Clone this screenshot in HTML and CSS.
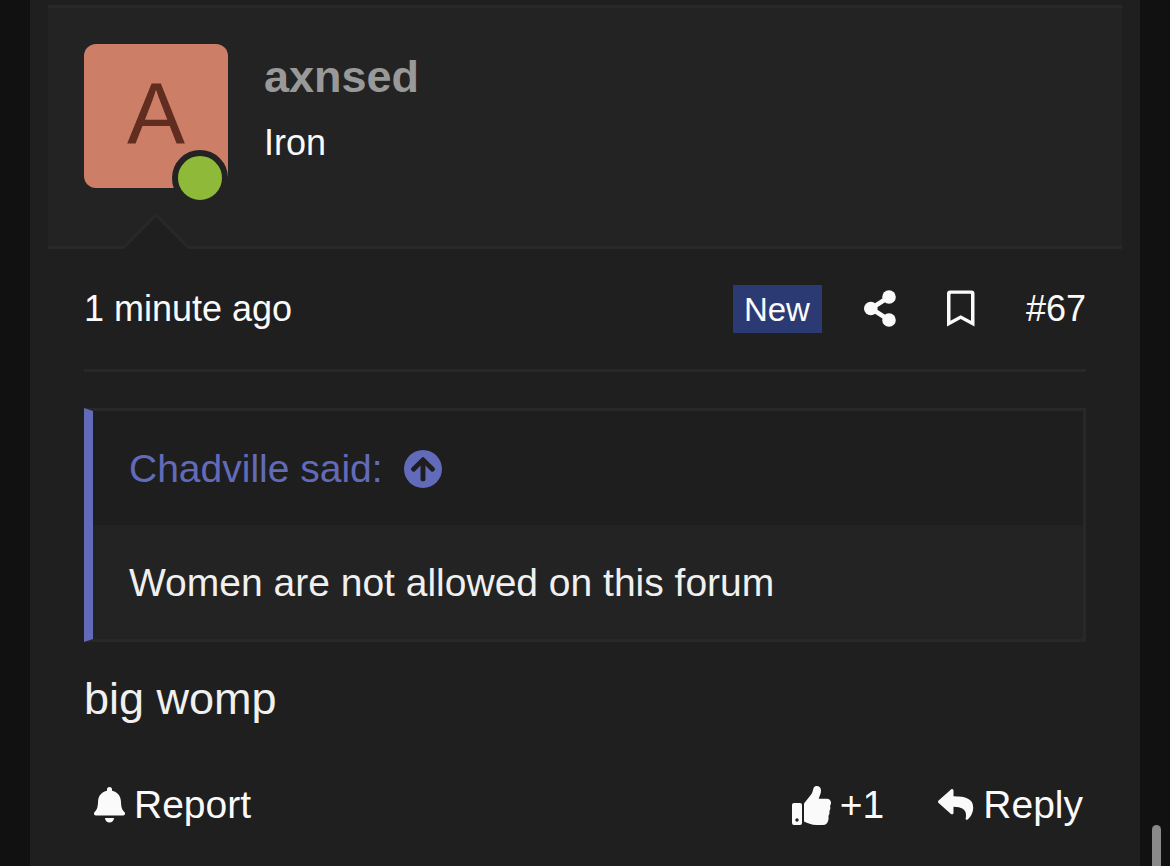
FILE: index.html
```html
<!DOCTYPE html>
<html lang="en">
<head>
    <meta charset="UTF-8">
    <meta name="viewport" content="width=device-width, initial-scale=1.0">
    <title>Forum post #67</title>
    <link rel="stylesheet" href="styles.css">
</head>
<body>
    <article class="message">
        <header class="message-user">
            <div class="avatar">
                <span class="avatar-letter">A</span>
                <span class="avatar-online" title="Online now"></span>
            </div>
            <div class="user-details">
                <h4 class="user-name"><a href="#user">axnsed</a></h4>
                <h5 class="user-title">Iron</h5>
            </div>
        </header>

        <div class="message-main">
            <div class="message-attribution">
                <a href="#post-67"><time>1 minute ago</time></a>
                <ul class="attribution-tools">
                    <li><span class="new-label">New</span></li>
                    <li>
                        <a class="icon-link" href="#share" aria-label="Share">
                            <svg class="icon" width="32" height="38" viewBox="0 0 32 38">
                                <path d="M25 7L7 18.500L25 30" fill="none" stroke="currentColor" stroke-width="4.500"/>
                                <circle cx="25" cy="7" r="6.800"/>
                                <circle cx="6.800" cy="18.500" r="6.800"/>
                                <circle cx="25" cy="30" r="6.800"/>
                            </svg>
                        </a>
                    </li>
                    <li>
                        <a class="icon-link" href="#bookmark" aria-label="Add bookmark">
                            <svg class="icon" width="28" height="38" viewBox="0 0 28 38"><path fill-rule="evenodd" d="M3 .5h21.500a3 3 0 0 1 3 3V36.500L13.700 29 0 36.500v-33a3 3 0 0 1 3-3zM3.500 4.500v26.300l10.200-5.600 10.300 5.600V4.500q0-.7-.7-.7H4.200q-.7 0-.7.7z"/></svg>
                        </a>
                    </li>
                    <li><a href="#post-67">#67</a></li>
                </ul>
            </div>

            <div class="message-content">
                <blockquote class="quote">
                    <div class="quote-title">
                        <a href="#quoted-post">Chadville said:
                            <svg class="icon" width="38" height="38" viewBox="8 8 496 496"><path d="M8 256C8 119 119 8 256 8s248 111 248 248-111 248-248 248S8 393 8 256zm143.6 28.9l72.4-75.4V392c0 13.3 10.7 24 24 24h16c13.3 0 24-10.7 24-24V209.5l72.4 75.4c9.3 9.7 24.8 9.9 34.3.4l10.9-11c9.4-9.4 9.4-24.6 0-33.9L273 107.7c-9.4-9.4-24.6-9.4-33.9 0L106.3 240.4c-9.4 9.4-9.4 24.6 0 33.9l10.9 11c9.6 9.5 25.1 9.3 34.4-.4z"/></svg>
                        </a>
                    </div>
                    <div class="quote-content">Women are not allowed on this forum</div>
                </blockquote>
                <p class="message-text">big womp</p>
            </div>

            <footer class="action-bar">
                <a class="action action-report" href="#report">
                    <svg class="icon" width="31" height="36" viewBox="0 0 31 36"><path d="M13 2.500a2.500 2.500 0 0 1 5 0v1.200c5 1 8.600 4.600 8.900 10.300.3 6.500 1 8.500 3.700 11.300.9 1.200.3 3.200-1.400 3.200H1.800C.1 28.500-.5 26.500.4 25.300 3.100 22.500 3.800 20.500 4.100 14 4.400 8.300 8 4.700 13 3.700zM11 31h9a4.500 4.500 0 0 1-9 0z"/></svg>
                    Report
                </a>
                <a class="action" href="#like">
                    <svg class="icon" width="39" height="39" viewBox="0 0 39 39"><path fill-rule="evenodd" d="M2 17h6a2 2 0 0 1 2 2v18a2 2 0 0 1-2 2H2a2 2 0 0 1-2-2V19a2 2 0 0 1 2-2zM5 32.300a1.700 1.700 0 1 0 0 3.400a1.700 1.700 0 1 0 0-3.400z"/><path d="M12 18.500c0-1 .3-1.500 1-2.200L19.500 8c1.500-2 1.300-5 2.500-6.700C23.800-1 28.800-.2 29 4.200c.2 3.300-1.700 5.800-2.300 8.600h8.300c2.500 0 4 1.800 4 4 0 1.500-.5 2.500-1 3.200.6 1.500.5 3.500-.6 5 .4 1.800 0 3.500-1 5 .3 2 .2 3.800-.3 4.800-.5 2.500-2.200 4.200-5.100 4.200h-6.300c-5.500 0-9-2-12.700-3.500z"/></svg>
                    +1
                </a>
                <a class="action" href="#reply">
                    <svg class="icon" width="36" height="34" viewBox="0 0 36 34"><path d="M.6 12.500L13 1.500c1-.9 2.500-.3 2.500 1.200v5.600C28 8.300 35.200 11 35.200 19.500c0 5-2.500 9.500-5.500 12-1 .8-2.300.1-2-1.200 1.700-8.500-3-11.300-12.200-11.600v6c0 1.500-1.500 2.100-2.500 1.200L.6 14.900c-.8-.7-.8-1.700 0-2.400z"/></svg>
                    Reply
                </a>
            </footer>
        </div>
    </article>

    <div class="scroll-thumb"></div>
</body>
</html>
```

FILE: styles.css
```css
* {
    box-sizing: border-box;
}
body {
    margin: 0;
    padding: 0 30px;
    background: #111;
    color: #fafafa;
    font-family: "Liberation Sans", Arial, sans-serif;
    font-size: 39px;
    line-height: 42px;
}
a {
    color: inherit;
    text-decoration: none;
}
.icon {
    display: block;
    fill: currentColor;
}
.message {
    min-height: 100vh;
    padding: 5px 18px 0;
    background: #1f1f1f;
}

/* User cell */
.message-user {
    position: relative;
    display: flex;
    gap: 36px;
    padding: 36px 36px 58px;
    background: #232323;
    border-top: 3px solid #282828;
    border-bottom: 3px solid #282828;
}
.message-user::before,
.message-user::after {
    content: "";
    position: absolute;
    left: 72px;
    bottom: -3px;
    border: 36px solid transparent;
    border-top: 0;
    border-bottom-color: #282828;
}
.message-user::after {
    bottom: -7px;
    border-bottom-color: #1f1f1f;
}
.avatar {
    position: relative;
    width: 144px;
    height: 144px;
    border-radius: 12px;
    background: #cc7f66;
    color: #602d20;
    font-size: 87px;
    line-height: 140px;
    text-align: center;
}
.avatar-online {
    position: absolute;
    right: 0;
    bottom: -18px;
    width: 56px;
    height: 56px;
    border: 6px solid #232323;
    border-radius: 50%;
    background: #8fb939;
}
.user-details {
    padding-top: 6px;
}
.user-name {
    margin: 0;
    color: #999;
    font-size: 45px;
    line-height: 54px;
}
.user-title {
    margin: 18px 0 0;
    font-size: 36px;
    font-weight: normal;
}

/* Post */
.message-main {
    padding: 0 36px;
}
.message-attribution {
    display: flex;
    align-items: center;
    justify-content: space-between;
    height: 123px;
    border-bottom: 3px solid #282828;
    font-size: 36px;
}
.attribution-tools {
    display: flex;
    align-items: center;
    gap: 42px;
    margin: 0;
    padding: 0;
    list-style: none;
}
.attribution-tools li:nth-child(n+3) {
    margin-left: 9px;
}
.new-label {
    display: block;
    padding: 2px 12px 0 11px;
    background: #2c3a73;
    font-size: 33px;
    line-height: 46px;
}
.quote {
    margin: 36px 0 0;
    border: 3px solid #282828;
    border-left: 9px solid #626bb9;
    background: #232323;
}
.quote-title {
    padding: 37px 36px 35px;
    background: #1e1e1e;
    color: #626bb9;
}
.quote-title a {
    display: flex;
    align-items: center;
    gap: 21px;
}
.quote-content {
    padding: 37px 36px 35px;
    color: #f0f0f0;
}
.message-text {
    margin: 30px 0 0;
    color: #f0f0f0;
    font-size: 45px;
    line-height: 54px;
}
.action-bar {
    display: flex;
    align-items: center;
    gap: 54px;
    margin-top: 58px;
    padding: 0 3px 0 10px;
}
.action {
    display: flex;
    align-items: center;
    gap: 9px;
}
.action-report {
    margin-right: auto;
}
.scroll-thumb {
    position: fixed;
    right: 9px;
    bottom: 0;
    width: 9px;
    height: 41px;
    border-radius: 5px 5px 0 0;
    background: #8a8a8a;
}
```
